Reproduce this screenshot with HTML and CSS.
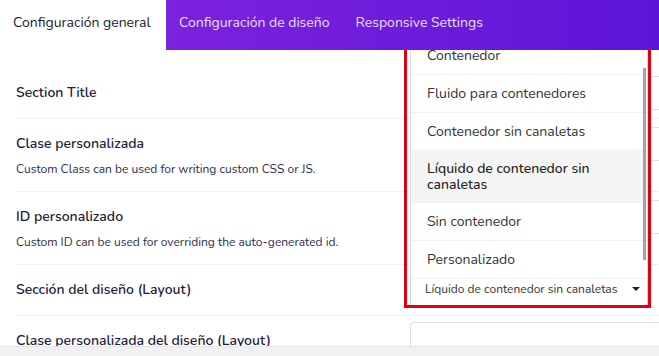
FILE: index.html
```html
<!DOCTYPE html>
<html lang="es">
<head>
    <meta charset="UTF-8">
    <meta name="viewport" content="width=device-width, initial-scale=1.0">
    <title>Configuración de sección</title>
    <link rel="stylesheet" href="styles.css">
</head>
<body>
    <div class="panel">
        <div class="tabs">
            <div class="tab active">Configuración general</div>
            <div class="tab">Configuración de diseño</div>
            <div class="tab">Responsive Settings</div>
        </div>

        <div class="fields">
            <div class="row">
                <div class="info">
                    <div class="label">Section Title</div>
                </div>
                <div class="control"><div class="input"></div></div>
            </div>
            <div class="row has-desc">
                <div class="info">
                    <div class="label">Clase personalizada</div>
                    <div class="desc">Custom Class can be used for writing custom CSS or JS.</div>
                </div>
                <div class="control"><div class="input"></div></div>
            </div>
            <div class="row has-desc">
                <div class="info">
                    <div class="label">ID personalizado</div>
                    <div class="desc">Custom ID can be used for overriding the auto-generated id.</div>
                </div>
                <div class="control"><div class="input"></div></div>
            </div>
            <div class="row">
                <div class="info">
                    <div class="label">Sección del diseño (Layout)</div>
                </div>
                <div class="control">
                    <div class="select-open">
                        <div class="options">
                            <div class="option-list">
                                <div class="option">Contenedor</div>
                                <div class="option">Fluido para contenedores</div>
                                <div class="option">Contenedor sin canaletas</div>
                                <div class="option hover">Líquido de contenedor sin canaletas</div>
                                <div class="option">Sin contenedor</div>
                                <div class="option">Personalizado</div>
                            </div>
                            <div class="scroll-thumb"></div>
                        </div>
                        <div class="select-face">
                            <span>Líquido de contenedor sin canaletas</span>
                            <span class="caret"></span>
                        </div>
                    </div>
                </div>
            </div>
            <div class="row">
                <div class="info">
                    <div class="label">Clase personalizada del diseño (Layout)</div>
                </div>
                <div class="control"><div class="input"></div></div>
            </div>
        </div>

        <div class="footer"></div>
    </div>
</body>
</html>
```

FILE: styles.css
```css
body {
    margin: 0;
    font-family: "Nunito", "Noto Sans", sans-serif;
    background-color: #fff;
    overflow: hidden;
}
.panel {
    display: flex;
    flex-direction: column;
    height: 100vh;
}
.tabs {
    display: flex;
    height: 50px;
    flex-shrink: 0;
    background: linear-gradient(90deg, #ffffff 0, #ffffff 166px, #7c22de 166px, #5d15d7 100%);
}
.tabs .tab {
    padding: 12px 13px 0 13px;
    font-size: 14px;
    line-height: 22px;
    color: #eadfff;
}
.tabs .tab.active {
    width: 140px;
    color: #1c1b2e;
    background-color: #fff;
}
.fields {
    flex: 1;
    overflow: hidden;
    padding: 18px 0 0 16px;
}
.fields .row {
    display: flex;
    align-items: flex-start;
    border-bottom: 1px solid #f0f0f2;
    padding: 14px 0;
}
.fields .row.has-desc {
    padding-bottom: 12px;
}
.fields .row .info {
    width: 384px;
    margin-right: 10px;
    flex-shrink: 0;
}
.fields .label {
    font-size: 14px;
    font-weight: 600;
    line-height: 22px;
    color: #1f1c3d;
}
.fields .desc {
    margin-top: 4px;
    font-size: 12px;
    line-height: 20px;
    color: #2e2b4c;
}
.fields .control {
    flex: 1;
    position: relative;
    margin: -6px 0 -14px 0;
}
.fields .input {
    height: 32px;
    border: 1px solid #dedfe3;
    border-right: none;
    border-radius: 4px 0 0 4px;
}
.fields .row:last-child .input {
    margin-top: -2px;
}

/* open select list */
.select-open {
    height: 34px;
}
.select-open .options {
    position: absolute;
    left: 0;
    bottom: 28px;
    width: 238px;
    height: 234px;
    overflow: hidden;
    background-color: #fff;
    border: 1px solid #d9dde3;
    border-bottom: none;
    box-sizing: border-box;
    z-index: 2;
}
.select-open .option-list {
    margin-top: -9px;
}
.select-open .option {
    padding: 9px 40px 9px 16px;
    font-size: 14px;
    line-height: 19px;
    color: #333;
    border-bottom: 1px solid #f0f0f0;
}
.select-open .option.hover {
    padding-top: 10px;
    padding-bottom: 9px;
    line-height: 16px;
    background-color: #f5f5f5;
    color: #222;
    font-weight: 500;
}
.select-open .scroll-thumb {
    position: absolute;
    right: 1px;
    top: 22px;
    width: 3px;
    height: 192px;
    background-color: #a3a3a3;
}
.select-open .select-face {
    display: flex;
    align-items: center;
    justify-content: space-between;
    height: 34px;
    width: 238px;
    box-sizing: border-box;
    padding: 0 7px 1px 14px;
    border: 1px solid #c6d7e4;
    border-top: none;
    border-radius: 0 0 4px 4px;
    background-color: #fff;
    font-size: 12px;
    color: #333;
}
.select-open .caret {
    width: 0;
    height: 0;
    border-left: 4px solid transparent;
    border-right: 4px solid transparent;
    border-top: 4px solid #222;
}
.select-open::after {
    content: "";
    position: absolute;
    left: -6px;
    top: -227px;
    width: 241px;
    height: 256px;
    border: 3px solid #e1000e;
    z-index: 3;
}

.footer {
    height: 9px;
    flex-shrink: 0;
    background-color: #f1f1f3;
    border-top: 1px solid #e6e6ea;
}
```
